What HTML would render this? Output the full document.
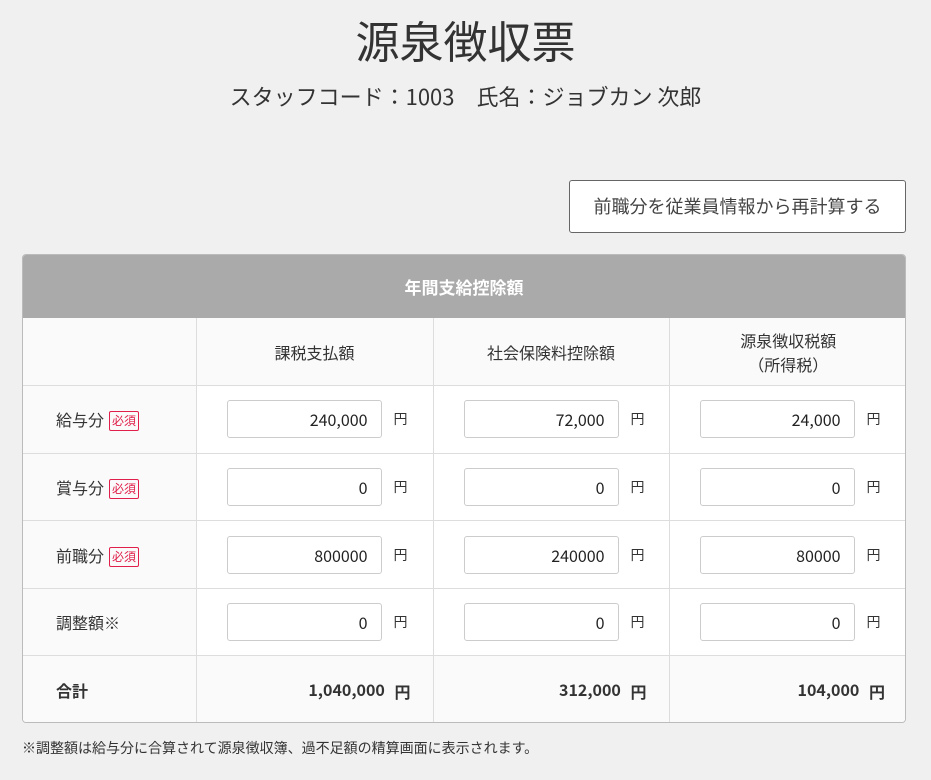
<!DOCTYPE html>
<html><head><meta charset="utf-8"><style>
*{box-sizing:border-box;margin:0;padding:0}
body{width:931px;height:780px;background:#f0f0f0;font-family:"Noto Sans CJK JP",sans-serif;color:#333;position:relative;overflow:hidden}
h1{position:absolute;top:8px;left:0;width:931px;text-align:center;font-size:44px;font-weight:400;line-height:62px;color:#333}
.sub{position:absolute;top:80px;left:0;width:931px;text-align:center;font-size:22px;line-height:32px}
.btn{position:absolute;left:569px;top:180px;width:337px;height:53px;border:1px solid #666;border-radius:3px;background:#fff;font-size:18px;line-height:51px;text-align:center;color:#444}
.tbl{position:absolute;left:22px;top:254px;width:884px;height:469px;border:1px solid #bbb;border-radius:4px;background:#fff;overflow:hidden}
.hd{height:63px;background:#aaa;color:#fff;font-weight:700;font-size:17px;text-align:center;line-height:63px}
table{border-collapse:collapse;width:884px;table-layout:fixed}
td{border:1px solid #ddd;font-size:16px;height:67.6px;vertical-align:middle}
tr:first-child td{border-top:none}
td:first-child{border-left:none}td:last-child{border-right:none}
tr:last-child td{border-bottom:none}
.ch td{background:#fafafa;text-align:center;line-height:24px}
td.lb{background:#fafafa;padding-left:33px}
.req{display:inline-block;border:1px solid #e0204a;color:#e0204a;border-radius:2px;font-size:12px;line-height:18px;padding:0 2px;margin-left:5px;vertical-align:1px}
.in{display:inline-block;width:155px;height:38px;border:1px solid #ccc;border-radius:3px;background:#fff;text-align:right;padding-right:13px;line-height:36px;font-size:16px;color:#222;vertical-align:middle}
.c{text-align:left;padding-left:30px}
.y{display:inline-block;margin-left:12px;font-size:14px;vertical-align:middle}
.tot td{background:#fafafa;font-weight:700}
.tot .v{text-align:right;padding-right:22px}
.note{position:absolute;left:22px;top:737px;font-size:14px;line-height:22px;color:#333}
</style></head><body>
<h1>源泉徴収票</h1>
<div class="sub">スタッフコード：1003　氏名：ジョブカン 次郎</div>
<div class="btn">前職分を従業員情報から再計算する</div>
<div class="tbl">
<div class="hd">年間支給控除額</div>
<table>
<colgroup><col style="width:173px"><col style="width:237px"><col style="width:236px"><col style="width:238px"></colgroup>
<tr class="ch"><td></td><td>課税支払額</td><td>社会保険料控除額</td><td>源泉徴収税額<br>（所得税）</td></tr>
<tr><td class="lb">給与分<span class="req">必須</span></td><td class="c"><span class="in">240,000</span><span class="y">円</span></td><td class="c"><span class="in">72,000</span><span class="y">円</span></td><td class="c"><span class="in">24,000</span><span class="y">円</span></td></tr>
<tr><td class="lb">賞与分<span class="req">必須</span></td><td class="c"><span class="in">0</span><span class="y">円</span></td><td class="c"><span class="in">0</span><span class="y">円</span></td><td class="c"><span class="in">0</span><span class="y">円</span></td></tr>
<tr><td class="lb">前職分<span class="req">必須</span></td><td class="c"><span class="in">800000</span><span class="y">円</span></td><td class="c"><span class="in">240000</span><span class="y">円</span></td><td class="c"><span class="in">80000</span><span class="y">円</span></td></tr>
<tr><td class="lb">調整額※</td><td class="c"><span class="in">0</span><span class="y">円</span></td><td class="c"><span class="in">0</span><span class="y">円</span></td><td class="c"><span class="in">0</span><span class="y">円</span></td></tr>
<tr class="tot"><td class="lb">合計</td><td class="v">1,040,000 <span class="y" style="margin-left:6px;font-size:16px">円</span></td><td class="v">312,000 <span class="y" style="margin-left:6px;font-size:16px">円</span></td><td class="v">104,000 <span class="y" style="margin-left:6px;font-size:16px">円</span></td></tr>
</table>
</div>
<div class="note">※調整額は給与分に合算されて源泉徴収簿、過不足額の精算画面に表示されます。</div>
</body></html>
